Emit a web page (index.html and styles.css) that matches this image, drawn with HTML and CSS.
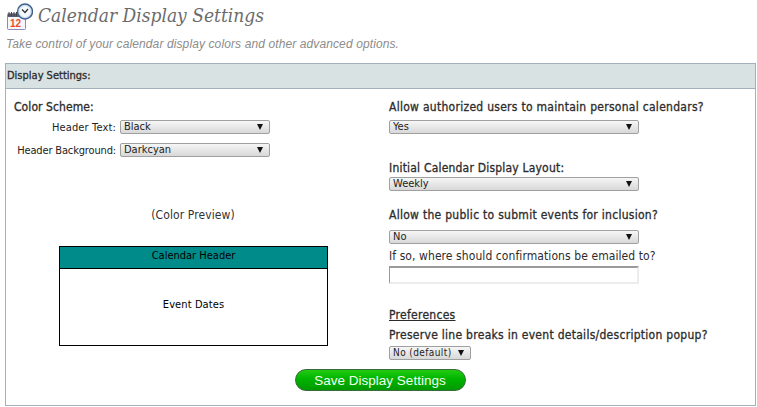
FILE: index.html

```html
<html>
<head>
    <title>Calendar Display Settings</title>
    <link rel="stylesheet" href="styles.css">
</head>
<body>
    <div class="page-title">
        <svg class="title-icon" width="30" height="30" viewBox="0 0 30 30">
            <rect x="4.5" y="12.5" width="18" height="16" rx="1" fill="#f6f6fb" stroke="#8f8bb0"/>
            <rect x="5" y="13" width="17" height="3" fill="#5d5a70"/>
            <path d="M6 11v4M8.5 11v4M11 11v4M13.5 11v4M16 11v4" stroke="#444" stroke-width="1"/>
            <text x="7" y="25.5" class="icon-num">12</text>
            <circle cx="22" cy="10.5" r="7.5" fill="#cfe0f2" stroke="#41618e" stroke-width="1.4"/>
            <circle cx="22" cy="10.5" r="5.4" fill="#f6faff"/>
            <path d="M19 8.5l3 3 3-3.5" fill="none" stroke="#333" stroke-width="1.3"/>
        </svg>
        <h1>Calendar Display Settings</h1>
    </div>
    <p class="subtitle">Take control of your calendar display colors and other advanced options.</p>

    <form class="panel">
        <div class="panel-head">Display Settings:</div>
        <div class="panel-body">
            <div class="col-left">
                <div class="label-strong">Color Scheme:</div>
                <div class="scheme-row">
                    <label>Header Text:</label>
                    <div class="select-wrap"><select class="sel-mid"><option>Black</option></select></div>
                </div>
                <div class="scheme-row">
                    <label>Header Background:</label>
                    <div class="select-wrap"><select class="sel-mid"><option>Darkcyan</option></select></div>
                </div>
                <div class="preview-note">(Color Preview)</div>
                <div class="preview">
                    <div class="preview-head">Calendar Header</div>
                    <div class="preview-body">Event Dates</div>
                </div>
            </div>
            <div class="col-right">
                <div class="label-strong">Allow authorized users to maintain personal calendars?</div>
                <div class="select-wrap gap-a"><select class="sel-wide"><option>Yes</option></select></div>

                <div class="label-strong top-a">Initial Calendar Display Layout:</div>
                <div class="select-wrap gap-d"><select class="sel-wide"><option>Weekly</option></select></div>

                <div class="label-strong top-b">Allow the public to submit events for inclusion?</div>
                <div class="select-wrap gap-b"><select class="sel-wide"><option>No</option></select></div>
                <div class="label-plain">If so, where should confirmations be emailed to?</div>
                <input class="email" type="text">

                <div class="label-strong prefs">Preferences</div>
                <div class="label-strong top-c">Preserve line breaks in event details/description popup?</div>
                <div class="select-wrap gap-c"><select class="sel-small"><option>No (default)</option></select></div>
            </div>
        </div>
        <div class="panel-foot">
            <button type="button" class="save-btn">Save Display Settings</button>
        </div>
    </form>
</body>
</html>
```

FILE: styles.css

```css
body {
    margin: 0;
    width: 757px;
    height: 407px;
    overflow: hidden;
    background: #fff;
    font-family: "DejaVu Sans Condensed", "DejaVu Sans", sans-serif;
    font-size: 12px;
    color: #222;
}

.page-title {
    display: flex;
    align-items: flex-start;
    height: 31px;
    padding-left: 3px;
}

.title-icon {
    flex: none;
    margin-right: 5px;
    margin-top: 1px;
}

.icon-num {
    font-family: "Liberation Sans", sans-serif;
    font-size: 10px;
    font-weight: bold;
    fill: #e8502a;
}

h1 {
    margin: 3px 0 0;
    font-family: "DejaVu Serif Condensed", "DejaVu Serif", serif;
    font-size: 19px;
    font-style: italic;
    font-weight: normal;
    line-height: 24px;
    color: #6b6b6b;
}

.subtitle {
    margin: 6px 0 0 6px;
    height: 26px;
    font-family: "Liberation Sans", sans-serif;
    font-size: 12px;
    font-style: italic;
    letter-spacing: 0.11px;
    line-height: 14px;
    color: #8c8c8c;
}

.panel {
    width: 749px;
    height: 341px;
    margin-left: 5px;
    border: 1px solid #a3b0bd;
}

.panel-head {
    height: 24px;
    padding-left: 1px;
    border-bottom: 1px solid #a3b0bd;
    background: #d9e2e2;
    font-size: 11px;
    -webkit-text-stroke: 0.3px #2c2c2c;
    line-height: 24px;
    color: #2c2c2c;
}

.panel-body {
    display: flex;
    height: 280px;
}

.col-left {
    width: 375px;
    padding: 10px 0 0 8px;
    box-sizing: border-box;
}

.col-right {
    flex: 1;
    padding: 10px 0 0 8px;
}

.label-strong {
    -webkit-text-stroke: 0.3px #2c2c2c;
    letter-spacing: 0.08px;
    line-height: 16px;
    color: #2c2c2c;
}

.col-right .label-strong {
    letter-spacing: 0.28px;
}

.col-right .top-a {
    letter-spacing: 0.2px;
}

.label-plain {
    margin-top: 4px;
    letter-spacing: 0.08px;
    line-height: 16px;
    color: #2c2c2c;
}

.scheme-row {
    display: flex;
    align-items: center;
    justify-content: flex-end;
    width: 256px;
    height: 14px;
    margin-top: 5px;
    font-size: 11px;
    letter-spacing: 0.15px;
    white-space: nowrap;
}

.scheme-row + .scheme-row {
    margin-top: 9px;
    letter-spacing: -0.15px;
}

.scheme-row label {
    margin-right: 4px;
}

.select-wrap {
    position: relative;
    display: inline-block;
    vertical-align: top;
    height: 14px;
    letter-spacing: 0;
}

.select-wrap::after {
    content: "";
    position: absolute;
    top: 4px;
    right: 7px;
    border-top: 6px solid #111;
    border-left: 3.5px solid transparent;
    border-right: 3.5px solid transparent;
    pointer-events: none;
}

select {
    appearance: none;
    display: block;
    box-sizing: border-box;
    height: 14px;
    margin: 0;
    padding: 0 0 0 3px;
    border: 1px solid #a0a0a0;
    border-radius: 2px;
    background: linear-gradient(#f6f6f6, #d8d8d8);
    font-family: inherit;
    font-size: 11px;
    line-height: 12px;
    color: #222;
}

.sel-mid {
    width: 150px;
}

.sel-wide {
    width: 250px;
}

.sel-small {
    width: 82px;
    font-size: 10px;
    letter-spacing: 0.4px;
}

.preview-note {
    width: 358px;
    margin-top: 50px;
    text-align: center;
    letter-spacing: 0.1px;
    line-height: 16px;
    color: #333;
}

.preview {
    box-sizing: border-box;
    width: 269px;
    height: 100px;
    margin: 23px 0 0 45px;
    border: 1px solid #000;
    text-align: center;
    color: #000;
}

.preview-head {
    height: 21px;
    border-bottom: 1px solid #000;
    background: #008b8b;
    font-size: 11px;
    line-height: 18px;
}

.preview-body {
    padding-top: 28px;
    font-size: 11px;
    letter-spacing: 0.1px;
    line-height: 16px;
}

.gap-a {
    margin-top: 5px;
}

.gap-b {
    margin-top: 7px;
}

.gap-c {
    margin-top: 3px;
}

.gap-d {
    margin-top: 1px;
}

.top-a {
    margin-top: 26px;
}

.top-b {
    margin-top: 16px;
}

.email {
    display: block;
    box-sizing: border-box;
    width: 250px;
    height: 18px;
    margin: 2px 0 0;
    padding: 0;
    border: 2px solid #ececec;
    border-top-color: #9a9a9a;
    border-left-width: 1px;
    border-left-color: #9a9a9a;
    background: #fff;
}

.prefs {
    margin-top: 23px;
    text-decoration: underline;
}

.top-c {
    margin-top: 4px;
}

.panel-foot {
    display: flex;
    justify-content: center;
}

.save-btn {
    box-sizing: border-box;
    width: 171px;
    height: 22px;
    margin-left: -1px;
    padding: 0;
    border: 1px solid #3a6a3a;
    border-radius: 11px;
    background: linear-gradient(#22cc11, #00b400 45%, #009a00);
    font-family: "Liberation Sans", sans-serif;
    font-size: 13.5px;
    color: #f2fff2;
}
```
